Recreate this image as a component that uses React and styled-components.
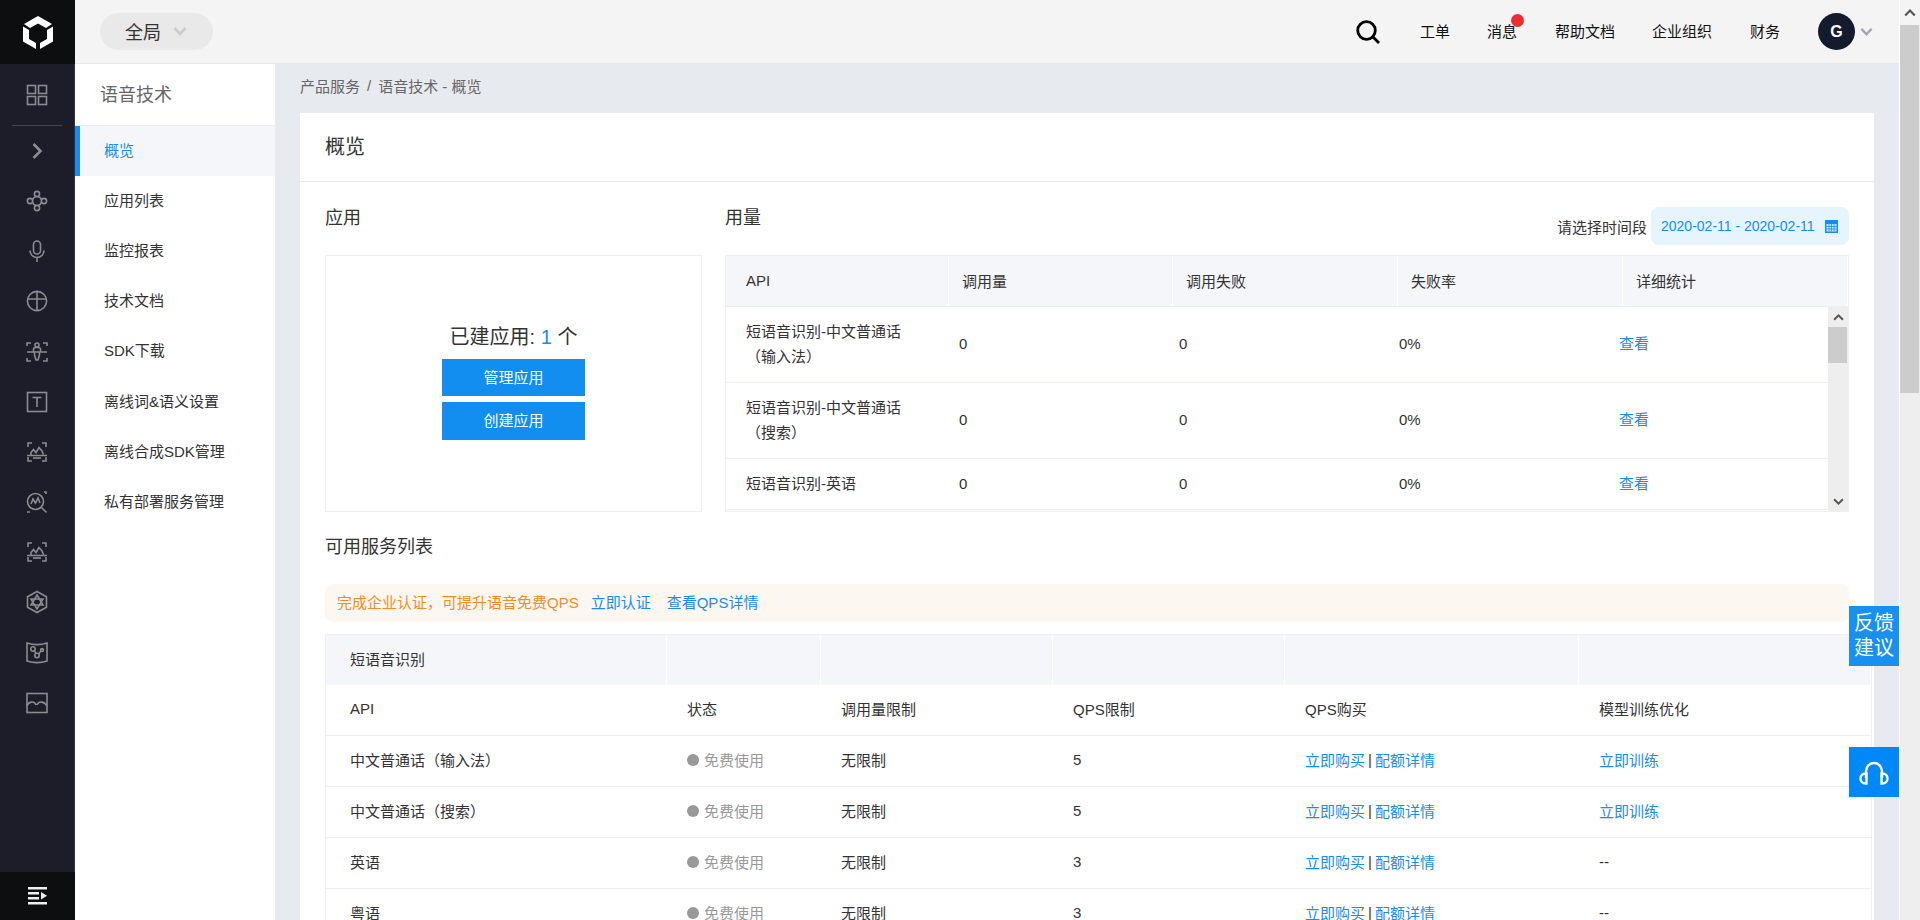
import styled, { createGlobalStyle } from 'styled-components';

const GlobalStyle = createGlobalStyle`
  html, body {
    margin: 0;
    height: 100%;
    overflow: hidden;
  }
  body {
    font-family: "Liberation Sans", "Noto Sans CJK SC", sans-serif;
    font-size: 15px;
    color: #333;
  }
  * {
    box-sizing: border-box;
  }
`;

const BLUE = '#1a8cf0';

const Page = styled.div`
  display: flex;
  width: 1920px;
  height: 920px;
  overflow: hidden;
  position: relative;
`;

const Rail = styled.div`
  width: 75px;
  flex: none;
  display: flex;
  flex-direction: column;
  background: #1c1d29;
  border-right: 1px solid #32333e;
`;

const RailLogo = styled.div`
  height: 64px;
  flex: none;
  display: flex;
  align-items: center;
  justify-content: center;
  background: #0d0e10;
  margin-right: -1px;
`;

const RailHead = styled.div`
  height: 62px;
  flex: none;
  margin: 0 12px;
  display: flex;
  align-items: center;
  justify-content: center;
  border-bottom: 1px solid #44454f;
  padding-top: 1px;
`;

const RailItem = styled.div`
  height: 50.15px;
  flex: none;
  display: flex;
  align-items: center;
  justify-content: center;
  color: #8b8c90;
`;

const RailFoot = styled.div`
  margin-top: auto;
  margin-right: -1px;
  height: 48px;
  flex: none;
  display: flex;
  align-items: center;
  justify-content: center;
  background: #0d0e10;
`;

const Shell = styled.div`
  width: 1824px;
  flex: none;
  display: flex;
  flex-direction: column;
`;

const TopBar = styled.div`
  height: 64px;
  flex: none;
  display: flex;
  align-items: center;
  padding-left: 25px;
  background: #f4f4f4;
  border-bottom: 1px solid #e8e8e8;
`;

const ScopePill = styled.div`
  width: 113px;
  height: 37px;
  padding: 0 0 2px 25px;
  display: flex;
  align-items: center;
  gap: 12px;
  border-radius: 19px;
  background: #e9e9e9;
  font-size: 18px;
  color: #333;
`;

const TopNav = styled.div`
  margin-left: auto;
  display: flex;
  align-items: center;
  font-size: 15px;
  color: #111;
`;

const SearchWrap = styled.div`
  display: flex;
  margin-right: 40px;
`;

const TopLink = styled.span`
  position: relative;
  top: -1px;
  margin-right: ${(p) => p.$gap}px;
`;

const RedDot = styled.i`
  position: absolute;
  top: -6px;
  right: -7px;
  width: 13px;
  height: 13px;
  border-radius: 50%;
  background: #ee2d33;
`;

const Avatar = styled.div`
  width: 37px;
  height: 37px;
  margin-left: 38px;
  border-radius: 50%;
  background: #141b2d;
  color: #fff;
  font-size: 16px;
  font-weight: 700;
  display: flex;
  align-items: center;
  justify-content: center;
`;

const AvatarArrow = styled.div`
  display: flex;
  margin: 0 26px 0 5px;
`;

const Below = styled.div`
  flex: 1;
  display: flex;
  min-height: 0;
`;

const SideMenu = styled.div`
  width: 200px;
  flex: none;
  background: #fff;
`;

const SideTitle = styled.div`
  height: 62px;
  padding: 0 0 4px 25px;
  display: flex;
  align-items: center;
  font-size: 18px;
  color: #666;
  border-bottom: 1px solid #ececec;
`;

const SideItem = styled.div`
  height: 50.1px;
  display: flex;
  align-items: center;
  padding: 0 0 3px ${(p) => (p.$active ? 24 : 29)}px;
  background: ${(p) => (p.$active ? '#f5f6fa' : '#fff')};
  border-left: ${(p) => (p.$active ? `5px solid ${BLUE}` : 'none')};
  color: ${(p) => (p.$active ? BLUE : '#333')};
`;

const Main = styled.div`
  flex: 1;
  min-width: 0;
  padding: 0 25px;
  background: #e7eaef;
  overflow: hidden;
`;

const Crumbs = styled.div`
  height: 49px;
  padding-bottom: 7px;
  display: flex;
  align-items: center;
  gap: 7px;
  color: #666;
`;

const Card = styled.div`
  background: #fff;
  height: 900px;
  overflow: hidden;
`;

const CardHead = styled.div`
  height: 69px;
  padding: 0 0 3px 25px;
  display: flex;
  align-items: center;
  font-size: 20px;
  color: #333;
  border-bottom: 1px solid #e9e9e9;
`;

const CardBody = styled.div`
  padding: 0 25px;
`;

const TopRow = styled.div`
  display: flex;
  gap: 23px;
  height: 347px;
`;

const LeftCol = styled.div`
  width: 377px;
  flex: none;
`;

const RightCol = styled.div`
  flex: 1;
  min-width: 0;
`;

const ColHead = styled.div`
  height: 73px;
  padding-top: 18px;
  display: flex;
  justify-content: space-between;
  align-items: flex-start;
`;

const SectionTitle = styled.div`
  font-size: 18px;
  line-height: 36px;
  color: #333;
`;

const AppBox = styled.div`
  height: 257px;
  border: 1px solid #eff0f4;
  display: flex;
  flex-direction: column;
  align-items: center;
  padding-top: 63px;
`;

const AppCount = styled.div`
  font-size: 20px;
  line-height: 36px;
  margin-bottom: 4px;
  color: #333;
  b {
    font-weight: 400;
    color: ${BLUE};
  }
`;

const AppButton = styled.div`
  width: 143px;
  height: ${(p) => p.$h}px;
  margin-bottom: 6px;
  padding-bottom: 3px;
  background: #118ef0;
  color: #fff;
  display: flex;
  align-items: center;
  justify-content: center;
`;

const DateGroup = styled.div`
  display: flex;
  align-items: center;
  gap: 4px;
  margin-top: 7px;
  color: #333;
`;

const DatePill = styled.div`
  width: 198px;
  height: 38px;
  padding-left: 10px;
  display: flex;
  align-items: center;
  gap: 10px;
  border-radius: 8px;
  background: #e6f4fe;
  color: ${BLUE};
  font-size: 14px;
`;

const UsageTable = styled.div`
  height: 257px;
  border: 1px solid #eff0f4;
  display: flex;
  flex-direction: column;
  overflow: hidden;
`;

const UsageHead = styled.div`
  height: 51px;
  flex: none;
  display: grid;
  grid-template-columns: 223px 224px 225px 225px 1fr;
  background: #f5f6fa;
  border-bottom: 1px solid #eff0f4;
`;

const UsageHeadCell = styled.div`
  display: flex;
  align-items: center;
  padding: 0 0 2px ${(p) => (p.$first ? 20 : 13)}px;
  border-right: 1px solid #fff;
`;

const UsageBody = styled.div`
  flex: 1;
  min-height: 0;
  display: flex;
  overflow: hidden;
`;

const UsageRows = styled.div`
  width: 1102px;
  flex: none;
`;

const UsageRow = styled.div`
  display: grid;
  grid-template-columns: 233px 220px 220px 220px 1fr;
  align-items: center;
  padding: 11.5px 0 13.5px;
  line-height: 25px;
  border-bottom: 1px solid #eeeef5;
`;

const UsageName = styled.div`
  padding-left: 20px;
  width: 200px;
`;

const LinkText = styled.span`
  color: ${BLUE};
`;

const BarTrack = styled.div`
  width: ${(p) => p.$w}px;
  flex: none;
  display: flex;
  flex-direction: column;
  background: #eee;
`;

const BarArrow = styled.div`
  height: ${(p) => p.$h}px;
  flex: none;
  display: flex;
  align-items: center;
  justify-content: center;
  background: ${(p) => p.$bg || 'transparent'};
`;

const BarThumb = styled.div`
  height: ${(p) => p.$h}px;
  flex: none;
  margin-right: ${(p) => p.$mr}px;
  background: #ccc;
`;

const BarFill = styled.div`
  flex: 1;
`;

const ServiceTitle = styled(SectionTitle)`
  margin-bottom: 19px;
`;

const Notice = styled.div`
  height: 38px;
  display: flex;
  align-items: center;
  padding: 0 0 3px 12px;
  border-radius: 8px;
  background: #fcf7f1;
  color: #ff8b1f;
`;

const NoticeLink = styled(LinkText)`
  margin-left: ${(p) => p.$gap}px;
`;

const ServiceTable = styled.div`
  width: 1547px;
  margin-top: 12px;
  border-left: 1px solid #eff0f4;
  border-right: 1px solid #eff0f4;
  border-top: 1px solid #eff0f4;
`;

const ServiceRow = styled.div`
  height: ${(p) => (p.$head ? 50 : 51)}px;
  display: grid;
  grid-template-columns: 341px 154px 232px 232px 294px 1fr;
  background: ${(p) => (p.$head ? '#f5f6fa' : '#fff')};
  border-bottom: ${(p) => (p.$head ? 'none' : '1px solid #eeeef5')};
`;

const ServiceCell = styled.div`
  display: flex;
  align-items: center;
  padding: 0 0 3px ${(p) => (p.$first ? 24 : 20)}px;
  border-right: ${(p) => (p.$head ? '1px solid #fff' : 'none')};
`;

const StatusDot = styled.i`
  width: 12px;
  height: 12px;
  margin-right: 5px;
  border-radius: 50%;
  background: #999;
`;

const StatusText = styled.span`
  color: #999;
`;

const Pipe = styled.span`
  margin: 0 3px;
`;

const PageBar = styled.div`
  width: 21px;
  flex: none;
  display: flex;
  flex-direction: column;
  background: #eee;
  border-left: 1px solid #fff;
`;

const Feedback = styled.div`
  position: absolute;
  left: 1849px;
  top: 606px;
  width: 50px;
  height: 60px;
  background: #1890f0;
  color: #fff;
  font-size: 20px;
  line-height: 25px;
  text-align: center;
  padding-top: 5px;
`;

const Headset = styled.div`
  position: absolute;
  left: 1849px;
  top: 747px;
  width: 50px;
  height: 50px;
  background: #0087f8;
  display: flex;
  align-items: center;
  justify-content: center;
`;

const Icon = ({ children, size = 24, box = 24, sw = 1.6 }) => (
  <svg width={size} height={size} viewBox={`0 0 ${box} ${box}`} fill="none" stroke="currentColor" strokeWidth={sw}>
    {children}
  </svg>
);

const FaceScan = () => (
  <Icon>
    <path d="M3 7V3h4M17 3h4v4M3 17v4h4M17 21h4v-4" />
    <path d="M2 15.500h20M6 15v-2.500l2.500-3 2.500 3 3-5 3 3.500 1.500 3.500" />
    <path d="M8 18h8" />
  </Icon>
);

const RAIL_ICONS = [
  <Icon sw={2.6} key="chevron">
    <path d="M8.500 5l7 7-7 7" />
  </Icon>,
  <Icon key="nodes">
    <circle cx="12" cy="5" r="2.600" />
    <circle cx="12" cy="19" r="2.600" />
    <circle cx="5" cy="12" r="2.600" />
    <circle cx="19" cy="12" r="2.600" />
    <path d="M7.500 11a4.800 4.800 0 0 1 3.500-3.500M16.500 11A4.800 4.800 0 0 0 13 7.500M7.500 13a4.800 4.800 0 0 0 3.500 3.500M16.500 13a4.800 4.800 0 0 1-3.500 3.500" />
  </Icon>,
  <Icon key="mic">
    <rect x="8.500" y="2" width="7" height="13" rx="3.500" />
    <path d="M5 11.500a7 7 0 0 0 14 0M12 18.500V23" />
  </Icon>,
  <Icon key="globe">
    <circle cx="12" cy="12" r="9.600" />
    <path d="M2.400 10h19.200M12 2.400V21.600" />
  </Icon>,
  <Icon key="body">
    <path d="M2 6V3h4M18 3h4v3M2 18v3h4M18 21h4v-3" />
    <circle cx="12" cy="5" r="2" />
    <path d="M2 12h20M8.500 12V9.500a2 2 0 0 1 2-2h3a2 2 0 0 1 2 2V12M9.500 12v3l1.500 5h2l1.500-5v-3" />
  </Icon>,
  <Icon key="text">
    <rect x="2.500" y="2.500" width="19" height="19" />
    <path d="M7.500 7.500h9M12 7.500V17" />
  </Icon>,
  <FaceScan key="face1" />,
  <Icon key="search-wave">
    <circle cx="10.500" cy="11.500" r="8" />
    <path d="M16.500 17.500l5 5M6 14l2-5 2.500 4 2.500-5 2 5" />
    <path d="M19 2h2v2M2 22h3" />
  </Icon>,
  <FaceScan key="face2" />,
  <Icon key="hex">
    <path d="M12 1.500l9.500 5.300v10.400L12 22.500l-9.500-5.300V6.800z" />
    <path d="M12 5l6 10H6zM12 19L6 9h12z" />
  </Icon>,
  <Icon key="map">
    <path d="M2 3c6 2 14 2 20 0v18c-6 2-14 2-20 0z" />
    <circle cx="8" cy="9" r="2.200" />
    <circle cx="12" cy="15.500" r="2.200" />
    <circle cx="17" cy="10" r="1.400" />
    <path d="M9.500 11l1.500 2.500M13.500 14l2.500-3" />
  </Icon>,
  <Icon key="hills">
    <rect x="2" y="2.500" width="20" height="19" />
    <path d="M2 15c1-4 7-6 9-1M12 14c2-5 8-3 10 1" />
  </Icon>,
];

const SIDE_ITEMS = ['概览', '应用列表', '监控报表', '技术文档', 'SDK下载', '离线词&语义设置', '离线合成SDK管理', '私有部署服务管理'];

const USAGE_ROWS = ['短语音识别-中文普通话（输入法）', '短语音识别-中文普通话（搜索）', '短语音识别-英语'];

const SERVICE_ROWS = [
  { name: '中文普通话（输入法）', qps: '5', train: true },
  { name: '中文普通话（搜索）', qps: '5', train: true },
  { name: '英语', qps: '3' },
  { name: '粤语', qps: '3' },
];

const Chevron = ({ color, w = 14, sw = 2.6 }) => (
  <svg width={w} height={w} viewBox="0 0 14 14" fill="none" stroke={color} strokeWidth={sw}>
    <path d="M1.500 4l5.500 6 5.500-6" />
  </svg>
);

const BarUp = ({ size = 11, color = '#555' }) => (
  <svg width={size} height={size} viewBox="0 0 10 10" fill="none" stroke={color} strokeWidth="1.800">
    <path d="M1 7l4-4 4 4" />
  </svg>
);

const BarDown = () => (
  <svg width="11" height="11" viewBox="0 0 10 10" fill="none" stroke="#555" strokeWidth="1.800">
    <path d="M1 3l4 4 4-4" />
  </svg>
);

export default function App() {
  return (
    <Page>
      <GlobalStyle />
      <Rail>
        <RailLogo>
          <svg width="30" height="33" viewBox="0 0 30 33" fill="#fff">
            <path d="M15 0l14 8-6 4-8-4.500L7 12 1 8z" />
            <path d="M0 10.500l6 3.500v9l7 4v6L0 25.500z" />
            <path d="M30 10.500L24 14v9l-7 4v6l13-7.500z" />
          </svg>
        </RailLogo>
        <RailHead>
          <Icon>
            <g color="#8b8c90" stroke="#8b8c90">
              <rect x="2.500" y="2.500" width="8" height="8" />
              <rect x="13.500" y="2.500" width="8" height="8" />
              <rect x="2.500" y="13.500" width="8" height="8" />
              <rect x="13.500" y="13.500" width="8" height="8" />
            </g>
          </Icon>
        </RailHead>
        {RAIL_ICONS.map((icon, idx) => (
          <RailItem key={idx}>{icon}</RailItem>
        ))}
        <RailFoot>
          <svg width="20" height="18" viewBox="0 0 20 18" fill="#eee">
            <rect y="0" width="19" height="2.500" />
            <rect y="5" width="11" height="2.500" />
            <rect y="10" width="11" height="2.500" />
            <rect y="15" width="19" height="2.500" />
            <path d="M13 5l6 3.800-6 3.800z" />
          </svg>
        </RailFoot>
      </Rail>

      <Shell>
        <TopBar>
          <ScopePill>
            全局
            <Chevron color="#ccc" />
          </ScopePill>
          <TopNav>
            <SearchWrap>
              <svg width="24" height="24" viewBox="0 0 24 24" fill="none" stroke="#000" strokeWidth="2.800">
                <circle cx="10.500" cy="10.500" r="8.800" />
                <path d="M17 17l6 6" />
              </svg>
            </SearchWrap>
            <TopLink $gap={37}>工单</TopLink>
            <TopLink $gap={38}>
              消息
              <RedDot />
            </TopLink>
            <TopLink $gap={37}>帮助文档</TopLink>
            <TopLink $gap={38}>企业组织</TopLink>
            <TopLink $gap={0}>财务</TopLink>
            <Avatar>G</Avatar>
            <AvatarArrow>
              <Chevron color="#a5a5ad" w={13} />
            </AvatarArrow>
          </TopNav>
        </TopBar>

        <Below>
          <SideMenu>
            <SideTitle>语音技术</SideTitle>
            {SIDE_ITEMS.map((item, idx) => (
              <SideItem key={item} $active={idx === 0}>
                {item}
              </SideItem>
            ))}
          </SideMenu>

          <Main>
            <Crumbs>
              <span>产品服务</span>
              <span>/</span>
              <span>语音技术 - 概览</span>
            </Crumbs>
            <Card>
              <CardHead>概览</CardHead>
              <CardBody>
                <TopRow>
                  <LeftCol>
                    <ColHead>
                      <SectionTitle>应用</SectionTitle>
                    </ColHead>
                    <AppBox>
                      <AppCount>
                        已建应用: <b>1</b> 个
                      </AppCount>
                      <AppButton $h={37}>管理应用</AppButton>
                      <AppButton $h={38}>创建应用</AppButton>
                    </AppBox>
                  </LeftCol>
                  <RightCol>
                    <ColHead>
                      <SectionTitle>用量</SectionTitle>
                      <DateGroup>
                        请选择时间段
                        <DatePill>
                          2020-02-11 - 2020-02-11
                          <svg width="13" height="13" viewBox="0 0 13 13">
                            <rect width="13" height="13" fill="#1a8cf0" />
                            <rect x="1.500" y="4" width="10" height="7.500" fill="#cfe8fc" />
                            <path d="M1.500 6.500h10M1.500 9h10M4 4v7.500M6.500 4v7.500M9 4v7.500" stroke="#1a8cf0" strokeWidth="0.800" />
                          </svg>
                        </DatePill>
                      </DateGroup>
                    </ColHead>
                    <UsageTable>
                      <UsageHead>
                        {['API', '调用量', '调用失败', '失败率', '详细统计'].map((h, idx) => (
                          <UsageHeadCell key={h} $first={idx === 0}>
                            {h}
                          </UsageHeadCell>
                        ))}
                      </UsageHead>
                      <UsageBody>
                        <UsageRows>
                          {USAGE_ROWS.map((name) => (
                            <UsageRow key={name}>
                              <UsageName>{name}</UsageName>
                              <span>0</span>
                              <span>0</span>
                              <span>0%</span>
                              <LinkText>查看</LinkText>
                            </UsageRow>
                          ))}
                        </UsageRows>
                        <BarTrack $w={21}>
                          <BarArrow $h={20}>
                            <BarUp />
                          </BarArrow>
                          <BarThumb $h={36} $mr={2} />
                          <BarFill />
                          <BarArrow $h={20}>
                            <BarDown />
                          </BarArrow>
                        </BarTrack>
                      </UsageBody>
                    </UsageTable>
                  </RightCol>
                </TopRow>

                <ServiceTitle>可用服务列表</ServiceTitle>
                <Notice>
                  完成企业认证，可提升语音免费QPS
                  <NoticeLink $gap={12}>立即认证</NoticeLink>
                  <NoticeLink $gap={16}>查看QPS详情</NoticeLink>
                </Notice>
                <ServiceTable>
                  <ServiceRow $head>
                    {['短语音识别', '', '', '', '', ''].map((h, idx) => (
                      <ServiceCell key={idx} $head $first={idx === 0}>
                        {h}
                      </ServiceCell>
                    ))}
                  </ServiceRow>
                  <ServiceRow>
                    {['API', '状态', '调用量限制', 'QPS限制', 'QPS购买', '模型训练优化'].map((h, idx) => (
                      <ServiceCell key={h} $first={idx === 0}>
                        {h}
                      </ServiceCell>
                    ))}
                  </ServiceRow>
                  {SERVICE_ROWS.map((row) => (
                    <ServiceRow key={row.name}>
                      <ServiceCell $first>{row.name}</ServiceCell>
                      <ServiceCell>
                        <StatusDot />
                        <StatusText>免费使用</StatusText>
                      </ServiceCell>
                      <ServiceCell>无限制</ServiceCell>
                      <ServiceCell>{row.qps}</ServiceCell>
                      <ServiceCell>
                        <LinkText>立即购买</LinkText>
                        <Pipe>|</Pipe>
                        <LinkText>配额详情</LinkText>
                      </ServiceCell>
                      <ServiceCell>{row.train ? <LinkText>立即训练</LinkText> : '--'}</ServiceCell>
                    </ServiceRow>
                  ))}
                </ServiceTable>
              </CardBody>
            </Card>
          </Main>
        </Below>
      </Shell>

      <PageBar>
        <BarArrow $h={25} $bg="#f4f4f4">
          <BarUp size={12} />
        </BarArrow>
        <BarThumb $h={368} $mr={1} />
        <BarFill />
      </PageBar>

      <Feedback>
        反馈
        <br />
        建议
      </Feedback>
      <Headset>
        <svg width="32" height="28" viewBox="0 0 32 28" fill="none" stroke="#fff" strokeWidth="2.400">
          <path d="M8 20V13a8 8 0 0 1 16 0v7" />
          <path d="M7.500 15.500a5 5 0 0 0 0 10h1v-10zM24.500 15.500a5 5 0 0 1 0 10h-1v-10z" />
        </svg>
      </Headset>
    </Page>
  );
}
